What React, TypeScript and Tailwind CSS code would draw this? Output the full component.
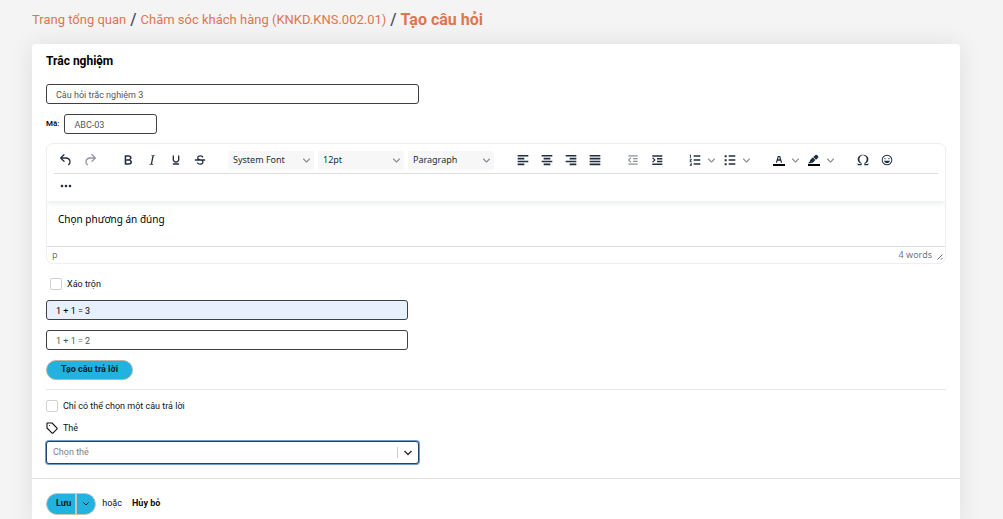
import React from "react";

type Children = { children: React.ReactNode };

const paths = {
  undo: "M6.4 8H12c3.7 0 6.2 2 6.8 5.1.6 2.7-.4 5.6-2.3 6.8a1 1 0 0 1-1-1.8c1.1-.6 1.8-2.7 1.4-4.6-.5-2.1-2.1-3.5-4.9-3.5H6.4l3.3 3.3a1 1 0 1 1-1.4 1.4l-5-5a1 1 0 0 1 0-1.4l5-5a1 1 0 0 1 1.4 1.4L6.4 8Z",
  redo: "M17.6 10H12c-2.8 0-4.4 1.4-4.9 3.5-.4 2 .3 4 1.4 4.6a1 1 0 1 1-1 1.8c-2-1.2-2.9-4.1-2.3-6.8.6-3 3-5.1 6.8-5.1h5.6l-3.3-3.3a1 1 0 1 1 1.4-1.4l5 5a1 1 0 0 1 0 1.4l-5 5a1 1 0 0 1-1.4-1.4l3.3-3.3Z",
  bold: "M7.8 19c-.3 0-.5 0-.6-.2l-.2-.5V5.7c0-.2 0-.4.2-.5l.6-.2h5c1.5 0 2.7.3 3.5 1 .7.6 1.1 1.4 1.1 2.5a3 3 0 0 1-.6 1.9c-.4.6-1 1-1.6 1.2.4.1.9.3 1.3.6s.8.7 1 1.2c.4.4.5 1 .5 1.6 0 1.3-.4 2.3-1.3 3-.8.7-2.1 1-3.8 1H7.8Zm5-8.3c.6 0 1.2-.1 1.6-.5.4-.3.6-.7.6-1.3 0-1.1-.8-1.7-2.3-1.7H9.3v3.5h3.4Zm.5 6c.7 0 1.3-.1 1.7-.4.4-.4.6-.9.6-1.5s-.2-1-.7-1.4c-.4-.3-1-.4-2-.4H9.4v3.8h4Z",
  italic: "M16.7 4.7l-.1.9h-.3c-.6 0-1 0-1.4.3-.3.3-.4.6-.5 1.1l-2.1 9.8v.6c0 .5.4.8 1.4.8h.2l-.2.8H8l.2-.8h.2c1.1 0 1.8-.5 2-1.5l2-9.8.1-.5c0-.6-.4-.8-1.4-.8h-.3l.2-.9h5.8Z",
  underline: "M16 5c.6 0 1 .4 1 1v5.5a4 4 0 0 1-.4 1.8l-1 1.4a5.3 5.3 0 0 1-5.5 1 5 5 0 0 1-1.6-1c-.5-.4-.8-.9-1.1-1.4a4 4 0 0 1-.4-1.8V6c0-.6.4-1 1-1s1 .4 1 1v5.5c0 .3 0 .6.2 1l.6.7a3.3 3.3 0 0 0 2.2.8 3.4 3.4 0 0 0 2.2-.8c.3-.2.4-.5.6-.8l.2-.9V6c0-.6.4-1 1-1ZM8 17h8c.6 0 1 .4 1 1s-.4 1-1 1H8a1 1 0 0 1 0-2Z",
  strike: "M15.6 8.5c-.5-.7-1-1.1-1.3-1.3-.6-.4-1.3-.6-2-.6-2.7 0-2.8 1.7-2.8 2.1 0 1.6 1.8 2 3.2 2.3 4.4.9 4.6 2.8 4.6 3.9 0 1.4-.7 4.1-5 4.1A6.2 6.2 0 0 1 7 16.4l1.5-1.1c.4.6 1.6 2 3.7 2 1.6 0 2.5-.4 3-1.2.4-.8.3-2-.8-2.6-.7-.4-1.6-.7-2.9-1-1-.2-3.9-.8-3.9-3.6C7.6 6 10.3 5 12.4 5c2.9 0 4.2 1.6 4.7 2.4l-1.5 1.1ZM5 11h14a1 1 0 0 1 0 2H5a1 1 0 0 1 0-2Z",
  alignLeft: "M4 4.5h16v2.4H4zM4 8.8h10v2.4H4zM4 13h16v2.4H4zM4 17.3h10v2.4H4z",
  alignCenter: "M4 4.5h16v2.4H4zM7 8.8h10v2.4H7zM4 13h16v2.4H4zM7 17.3h10v2.4H7z",
  alignRight: "M4 4.5h16v2.4H4zM10 8.8h10v2.4H10zM4 13h16v2.4H4zM10 17.3h10v2.4H10z",
  alignJustify: "M4 4.5h16v2.4H4zM4 8.8h16v2.4H4zM4 13h16v2.4H4zM4 17.3h16v2.4H4z",
  outdent: "M5 4.8h14v2H5zM12 9h7v2h-7zM12 13h7v2h-7zM5 17.2h14v2H5zM9.5 9.2 6.7 12l2.8 2.8-1.2 1.2-4-4 4-4z",
  indent: "M5 4.8h15v2.2H5zM12 9h8v2.2h-8zM12 13h8v2.2h-8zM5 17.2h15v2.2H5zM4.8 9.2 7.6 12l-2.8 2.8L6 16l4-4-4-4z",
  ordered: "M10 5h10v2.3H10zM10 11h10v2.3H10zM10 17h10v2.3H10zM6 4v5H4.8V5.3H4V4zM4 10.3h3V12l-1.5 1.5H7v1H4v-1.3L5.7 11.3H4zM4 16h3v5H4v-1h2v-1H4.5v-1H6v-1H4z",
  bullets: "M10 5h10v2.3H10zM10 11h10v2.3H10zM10 17h10v2.3H10zM4 4.7h3v3H4zM4 10.7h3v3H4zM4 16.7h3v3H4z",
  textColor: "M8.7 16h-.8a.5.5 0 0 1-.5-.6l2.7-9c.1-.3.3-.4.5-.4h2.8c.2 0 .4.1.5.4l2.7 9a.5.5 0 0 1-.5.6h-.8a.5.5 0 0 1-.4-.4l-.7-2.2c0-.3-.3-.4-.5-.4h-3.4c-.2 0-.4.1-.5.4l-.7 2.2c0 .3-.2.4-.4.4Zm2.6-7.6-.6 2a.5.5 0 0 0 .5.6h1.6a.5.5 0 0 0 .5-.6l-.6-2c0-.3-.3-.4-.5-.4h-.4c-.2 0-.4.1-.5.4Z",
  highlight: "M7.7 16.7H3l3.3-3.3-.7-.8L10.2 8l4 4.1-4 4.2c-.2.2-.6.2-.8 0l-.6-.7-1.1 1.1zM12.2 8.7 11 7.4l3-2.900a2 2 0 0 1 2.600 0L18 6c.7.7.7 2 0 2.700l-2.900 2.900z",
  omega: "M15 18h4l1-2v4h-6v-3.3l1.4-1a6 6 0 0 0 1.8-2.9 6.3 6.3 0 0 0-.1-4.1 5.8 5.8 0 0 0-3-3.2c-.6-.3-1.3-.5-2.1-.5a5.1 5.1 0 0 0-3.9 1.8 6.3 6.3 0 0 0-1.3 6 6.2 6.2 0 0 0 1.8 3l1.4.9V20H4v-4l1 2h4v-.5l-2-1L5.400 15A6.500 6.500 0 0 1 4 11c0-1 .2-1.900.6-2.700A7 7 0 0 1 6.300 6C7.100 5.400 8 5 9 4.500c1-.3 2-.5 3.100-.5a8.800 8.800 0 0 1 5.700 2 7 7 0 0 1 1.700 2.300 6 6 0 0 1 .2 4.800c-.2.7-.6 1.300-1 1.900a7.600 7.600 0 0 1-3.600 2.500v.5Z",
  emoji: "M9 11c.6 0 1-.4 1-1s-.4-1-1-1a1 1 0 0 0-1 1c0 .6.4 1 1 1Zm6 0c.6 0 1-.4 1-1s-.4-1-1-1a1 1 0 0 0-1 1c0 .6.4 1 1 1Zm-3 5.500c2.100 0 4-1.500 4.400-3.500H7.600c.5 2 2.300 3.500 4.400 3.500ZM12 4a8 8 0 1 0 0 16 8 8 0 0 0 0-16Zm0 14.500a6.500 6.500 0 1 1 0-13 6.500 6.500 0 0 1 0 13Z",
  more: "M6 10a2 2 0 0 0-2 2c0 1.100.9 2 2 2a2 2 0 0 0 2-2 2 2 0 0 0-2-2Zm12 0a2 2 0 0 0-2 2c0 1.100.9 2 2 2a2 2 0 0 0 2-2 2 2 0 0 0-2-2Zm-6 0a2 2 0 0 0-2 2c0 1.100.9 2 2 2a2 2 0 0 0 2-2 2 2 0 0 0-2-2Z",
};

type IconName = keyof typeof paths;

function Chevron({ className }: { className: string }) {
  return (
    <svg viewBox="0 0 10 10" aria-hidden="true" className={className} fill="currentColor">
      <path d="M8.700 2.200c.3-.3.8-.3 1 0 .4.4.4.9 0 1.200L5.700 7.800c-.3.3-.9.3-1.200 0L.2 3.400a.8.8 0 0 1 0-1.200c.3-.3.8-.3 1.100 0L5 6l3.700-3.800Z" />
    </svg>
  );
}

function Tool({ icon, label, disabled, swatch }: { icon: IconName; label: string; disabled?: boolean; swatch?: boolean }) {
  return (
    <button
      type="button"
      aria-label={label}
      disabled={disabled}
      className="flex h-5 w-[23px] items-center justify-center text-[#222f3e] disabled:opacity-50"
    >
      <svg viewBox="0 0 24 24" aria-hidden="true" className="size-4" fill="currentColor">
        <path d={paths[icon]} />
        {swatch && <path d="M3 18h18v3H3z" fill="#000000" />}
      </svg>
    </button>
  );
}

function SplitTool({ icon, label, swatch }: { icon: IconName; label: string; swatch?: boolean }) {
  return (
    <div className="flex">
      <Tool icon={icon} label={label} swatch={swatch} />
      <button type="button" aria-label={`${label} menu`} className="flex w-[11px] items-center justify-center text-[#222f3e]/55">
        <Chevron className="size-[7px]" />
      </button>
    </div>
  );
}

function Group({ children }: Children) {
  return <div className="flex gap-px">{children}</div>;
}

function ToolSelect({ label, value }: { label: string; value: string }) {
  return (
    <div className="relative">
      <select
        aria-label={label}
        className="block h-[19px] w-[86px] appearance-none rounded-xs bg-[#f7f7f7] px-[5px] font-['Noto_Sans',sans-serif] text-[9px] text-[#222f3e]"
      >
        <option>{value}</option>
      </select>
      <Chevron className="pointer-events-none absolute top-1.5 right-1 size-[7px] text-[#222f3e]/55" />
    </div>
  );
}

function Editor() {
  return (
    <section
      aria-label="Rich text"
      className="mt-[9px] overflow-hidden rounded-[7px] border border-[#eeeeee] font-['Noto_Sans',sans-serif]"
    >
      <div className="relative px-[7px] pb-[5px] shadow-[0_2px_5px_rgba(34,47,62,0.1)]">
        <div className="flex flex-wrap items-center gap-x-[15px] border-b border-[#dddddd] pt-1.5 pb-[3px]">
          <Group>
            <Tool icon="undo" label="Undo" />
            <Tool icon="redo" label="Redo" disabled />
          </Group>
          <Group>
            <Tool icon="bold" label="Bold" />
            <Tool icon="italic" label="Italic" />
            <Tool icon="underline" label="Underline" />
            <Tool icon="strike" label="Strikethrough" />
          </Group>
          <div className="mx-0.5 flex gap-1">
            <ToolSelect label="Font" value="System Font" />
            <ToolSelect label="Font size" value="12pt" />
            <ToolSelect label="Block format" value="Paragraph" />
          </div>
          <Group>
            <Tool icon="alignLeft" label="Align left" />
            <Tool icon="alignCenter" label="Align center" />
            <Tool icon="alignRight" label="Align right" />
            <Tool icon="alignJustify" label="Justify" />
          </Group>
          <Group>
            <Tool icon="outdent" label="Decrease indent" disabled />
            <Tool icon="indent" label="Increase indent" />
          </Group>
          <Group>
            <SplitTool icon="ordered" label="Numbered list" />
            <SplitTool icon="bullets" label="Bullet list" />
          </Group>
          <Group>
            <SplitTool icon="textColor" label="Text color" swatch />
            <SplitTool icon="highlight" label="Background color" swatch />
          </Group>
          <Group>
            <Tool icon="omega" label="Special character" />
            <Tool icon="emoji" label="Emojis" />
          </Group>
        </div>
        <div className="pt-0.5">
          <Tool icon="more" label="More" />
        </div>
      </div>
      <textarea
        aria-label="Nội dung câu hỏi"
        defaultValue="Chọn phương án đúng"
        className="block h-[45px] w-full resize-none px-[11px] pt-2.5 text-[10px] leading-4 text-black outline-none"
      />
      <div className="flex h-[17px] items-center justify-between border-t border-[#dddddd] px-[5px] text-[9px] text-[#222f3e]/70">
        <span>p</span>
        <span className="flex items-center gap-1">
          4 words
          <svg viewBox="0 0 8 8" aria-hidden="true" className="mt-1 -mr-1 size-2" fill="none" stroke="currentColor">
            <path d="M1.500 6.500 6.500 1.500M5 6.500l1.500-1.500" />
          </svg>
        </span>
      </div>
    </section>
  );
}

function Check({ children }: Children) {
  return (
    <label className="flex w-fit items-center gap-[5px] text-[9px] leading-3 text-[#111111]">
      <input type="checkbox" className="size-3 appearance-none rounded-xs border border-[#cfd2d6] bg-white checked:bg-[#22b2e0]" />
      {children}
    </label>
  );
}

const field =
  "block h-5 max-w-full rounded-[3px] border border-[#3f3f46] px-[9px] pt-px text-[9px] outline-none";

export default function App() {
  return (
    <div className="flex min-h-screen flex-col bg-[#f4f4f4] pr-[43px] pl-8 font-[Roboto,sans-serif]">
      <nav aria-label="Breadcrumb" className="flex h-11 items-center gap-1 pb-1 text-[13px] text-[#e07450]">
        <a href="#home">Trang tổng quan</a>
        <span className="text-base font-medium text-[#4b5063]">/</span>
        <a href="#course">Chăm sóc khách hàng (KNKD.KNS.002.01)</a>
        <span className="text-base font-medium text-[#4b5063]">/</span>
        <span aria-current="page" className="text-base font-bold">Tạo câu hỏi</span>
      </nav>

      <main className="flex-1 rounded-t-[4px] bg-white shadow-[0_0_24px_rgba(0,0,0,0.09)]">
        <form onSubmit={(e) => e.preventDefault()}>
          <div className="px-3.5 pt-2 pb-3.5">
            <h1 className="text-xs leading-[18px] font-bold text-black">Trắc nghiệm</h1>
            <input
              aria-label="Tên câu hỏi"
              defaultValue="Câu hỏi trắc nghiệm 3"
              className={`${field} mt-3.5 w-[373px] text-[#555555]`}
            />
            <div className="mt-2.5 flex items-center gap-[5px]">
              <label htmlFor="code" className="text-[8px] font-medium text-black">Mã:</label>
              <input id="code" defaultValue="ABC-03" className={`${field} w-[93px] text-[#555555]`} />
            </div>

            <Editor />

            <div className="mt-3.5 ml-1">
              <Check>Xáo trộn</Check>
            </div>
            <input
              aria-label="Câu trả lời 1"
              defaultValue="1 + 1 = 3"
              className={`${field} mt-2.5 w-[362px] bg-[#e8f0fe] text-black`}
            />
            <input
              aria-label="Câu trả lời 2"
              defaultValue="1 + 1 = 2"
              className={`${field} mt-2.5 w-[362px] text-[#555555]`}
            />
            <button
              type="button"
              className="mt-2.5 block h-5 rounded-full border border-[#b9b5a4] bg-[#22b2e0] px-3.5 text-[9px] font-bold text-[#0b1a2b]"
            >
              Tạo câu trả lời
            </button>

            <hr className="mt-[9px] mb-2.5 border-[#e5e7eb]" />

            <Check>Chỉ có thể chọn một câu trả lời</Check>
            <label htmlFor="tags" className="mt-2.5 flex items-center gap-[5px] text-[9px] leading-3 text-[#111111]">
              <svg viewBox="0 0 24 24" aria-hidden="true" className="size-3" fill="none" stroke="#111111" strokeWidth="2.200" strokeLinejoin="round" strokeLinecap="round">
                <path d="M21.600 14.400l-7.200 7.200a2 2 0 0 1-2.800 0L2 12V2h10l9.600 9.600a2 2 0 0 1 0 2.800zM7 7h.01" />
              </svg>
              Thẻ
            </label>
            <div className="relative mt-[7px] w-[373px] max-w-full">
              <select
                id="tags"
                className="block h-[23px] w-full appearance-none rounded-[3px] border border-[#27406b] bg-white px-1.5 text-[9px] text-[#808080] ring-1 ring-[#6f9bc8] outline-none"
              >
                <option>Chọn thẻ</option>
              </select>
              <span className="pointer-events-none absolute inset-y-1.5 right-[7px] flex items-center border-l border-[#cccccc] pl-1.5">
                <svg viewBox="0 0 8 8" aria-hidden="true" className="size-2" fill="none" stroke="#333333" strokeWidth="1.500">
                  <path d="M.5 2 4 5.500 7.500 2" />
                </svg>
              </span>
            </div>
          </div>

          <div className="flex items-center gap-1.5 border-t border-[#dcdfe3] px-3.5 py-3.5 text-[9px] text-[#111111]">
            <div className="flex h-[22px] overflow-hidden rounded-full border border-[#c9c6b4] bg-[#22b2e0]">
              <button type="submit" className="pr-1 pl-[9px] font-bold text-[#0b1a2b]">Lưu</button>
              <button
                type="button"
                aria-label="Thêm tùy chọn lưu"
                className="flex w-5 items-center justify-center border-l-2 border-[#c9c6b4] text-[#0b1a2b]"
              >
                <svg viewBox="0 0 6 6" aria-hidden="true" className="size-1.5" fill="none" stroke="currentColor">
                  <path d="M.5 1.500 3 4 5.500 1.500" />
                </svg>
              </button>
            </div>
            <span>hoặc</span>
            <button type="button" className="ml-1 font-bold">Hủy bỏ</button>
          </div>
        </form>
      </main>
    </div>
  );
}
